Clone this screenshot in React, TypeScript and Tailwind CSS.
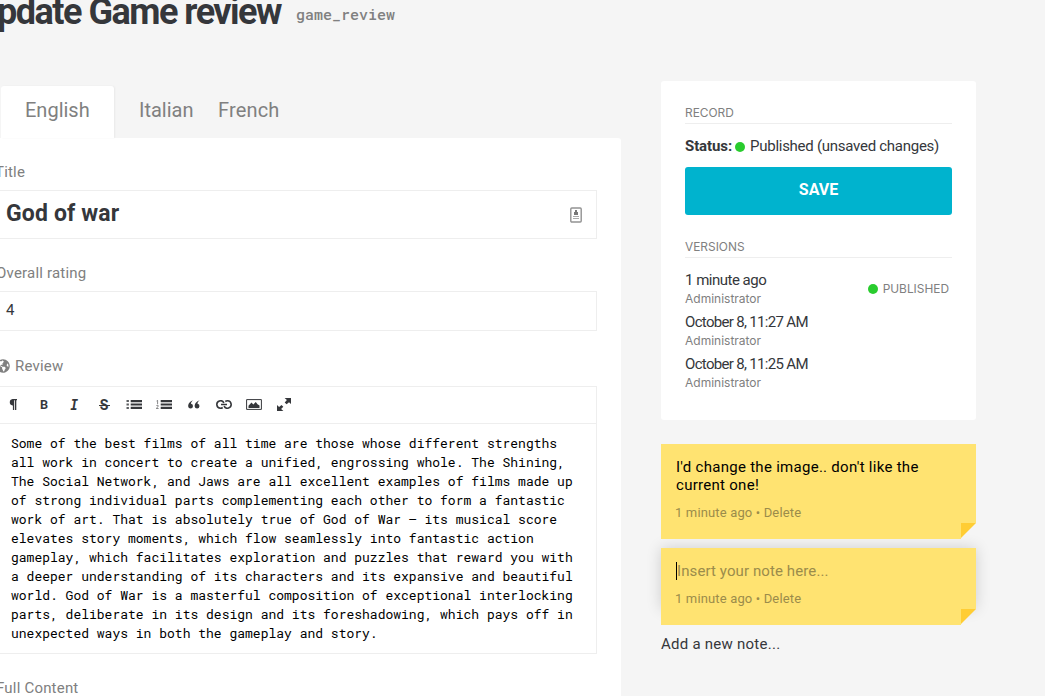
import type { ReactNode } from "react";
import { FaGlobeAmericas } from "react-icons/fa";

const review = [
  "Some of the best films of all time are those whose different strengths",
  "all work in concert to create a unified, engrossing whole. The Shining,",
  "The Social Network, and Jaws are all excellent examples of films made up",
  "of strong individual parts complementing each other to form a fantastic",
  "work of art. That is absolutely true of God of War – its musical score",
  "elevates story moments, which flow seamlessly into fantastic action",
  "gameplay, which facilitates exploration and puzzles that reward you with",
  "a deeper understanding of its characters and its expansive and beautiful",
  "world. God of War is a masterful composition of exceptional interlocking",
  "parts, deliberate in its design and its foreshadowing, which pays off in",
  "unexpected ways in both the gameplay and story.",
];

const versions = [
  { date: "1 minute ago", published: true },
  { date: "October 8, 11:27 AM", published: false },
  { date: "October 8, 11:25 AM", published: false },
];

function Label({ children }: { children: ReactNode }) {
  return (
    <div className="flex h-5 items-center text-[15px] leading-5 tracking-[0.2px] text-[#808080]">{children}</div>
  );
}

function Tool({ children }: { children: ReactNode }) {
  return <button className="flex h-[35px] w-[30px] items-center justify-center text-[#35373b]">{children}</button>;
}

function ListIcon({ numbered = false }: { numbered?: boolean }) {
  return (
    <svg width="16" height="9" viewBox="0 0 16 9" fill="currentColor">
      {numbered ? (
        <path
          d="M.6 1 1.6.4V4M.4 6c.2-1 2-1 2 0 0 .9-2 1.4-2 2.5h2.2"
          fill="none"
          stroke="currentColor"
          strokeWidth=".6"
        />
      ) : (
        <path d="M.5 0h2.4v2H.5zM.5 3.5h2.4v2H.5zM.5 7h2.4v2H.5z" opacity=".8" />
      )}
      <path d="M4.7 0H16v2.2H4.7zM4.7 3.4H16v2.2H4.7zM4.7 6.8H16V9H4.7z" />
    </svg>
  );
}

function Toolbar() {
  return (
    <div className="flex h-[37px] border-b border-[#eeeeee] pl-[2px]">
      <Tool>
        <svg width="8" height="11" viewBox="0 0 8 11" fill="currentColor" className="mr-[2px]">
          <path d="M3.5 0H8v1.2h-.7V11H6V1.2h-.8V11H3.9V6.5h-.4A3.3 3.3 0 0 1 3.5 0Z" />
        </svg>
      </Tool>
      <Tool>
        <span className="font-['Roboto_Mono','DejaVu_Sans_Mono',monospace] text-[13px] font-bold">B</span>
      </Tool>
      <Tool>
        <span className="font-['Roboto_Mono','DejaVu_Sans_Mono',monospace] text-[14px] font-bold italic">I</span>
      </Tool>
      <Tool>
        <span className="relative font-[Roboto,sans-serif] text-[14px] leading-5 font-bold">
          S
          <span className="absolute top-[10px] -left-[1px] h-px w-[11px] bg-[#35373b]" />
        </span>
      </Tool>
      <Tool><ListIcon /></Tool>
      <Tool><ListIcon numbered /></Tool>
      <Tool>
        <svg width="12" height="9" viewBox="0 0 12 9" fill="currentColor">
          <path d="M5.2.3C3.7 1.2 3 2.6 3 3.8a2.4 2.4 0 1 1-2.8 2.6C0 3.8 2 1.2 5.2.3ZM11.7.3c-1.5.9-2.2 2.3-2.2 3.5a2.4 2.4 0 1 1-2.8 2.6C6.5 3.8 8.5 1.2 11.7.3Z" />
        </svg>
      </Tool>
      <Tool>
        <svg width="16" height="9" viewBox="0 0 16 9" fill="none" stroke="currentColor" strokeWidth="1.6">
          <path d="M6.7 7.5A3.6 3.6 0 0 1 4.6 8.2a3.7 3.7 0 1 1 3.3-5.3M9.3 1.5A3.6 3.6 0 0 1 11.4.8a3.7 3.7 0 1 1-3.3 5.3M5 4.5h6" />
        </svg>
      </Tool>
      <Tool>
        <svg width="16" height="11" viewBox="0 0 16 11" fill="currentColor">
          <path d="M.6.6h14.8v9.8H.6z" fill="none" stroke="currentColor" strokeWidth="1" />
          <path d="M2.5 9V6.8l3-3.3 1.8 2L9.8 3l1.7 2.2 2 1.3V9z" />
        </svg>
      </Tool>
      <Tool>
        <svg width="14" height="13" viewBox="0 0 14 13" fill="currentColor">
          <path d="M7.6 0H14v5.9l-2-1.7-2.4 2.1-1.9-1.9L9.9 2zM0 7.1V13h6.4L4.1 11l2.2-2.3-1.8-1.8L2.1 9z" />
        </svg>
      </Tool>
    </div>
  );
}

function SectionTitle({ children }: { children: ReactNode }) {
  return (
    <h2 className="h-[19px] border-b border-[#eeeeee] font-[Inter,sans-serif] text-[11.9px] leading-[16px] text-[#808080]">
      {children}
    </h2>
  );
}

function Note({ children, active = false }: { children: ReactNode; active?: boolean }) {
  return (
    <div>
      <div
        className={
          active
            ? "bg-[#ffe371] px-[15px] pt-[14px] shadow-[0_0_14px_rgba(0,0,0,0.16)]"
            : "bg-[#ffe371] px-[15px] pt-[14px]"
        }
      >
        <div className="text-[15px] leading-[18px]">{children}</div>
        <div className="mt-[9px] -ml-px h-[20px] text-[13px] leading-[20px] tracking-[0.15px] text-[#9b8c4b]">
          1 minute ago • Delete
        </div>
      </div>
      <div className="relative flex h-4">
        <div className="flex-1 bg-[#ffe371]" />
        <svg width="15" height="16" viewBox="0 0 15 16">
          <path d="M0 0h15L0 15z" fill="#ffcd34" />
        </svg>
      </div>
    </div>
  );
}

export default function App() {
  return (
    <div className="flex h-[696px] w-[1045px] overflow-hidden bg-[#f5f5f5] font-[Roboto,sans-serif] text-[#35373b]">
      <main className="-ml-7 w-[649px] shrink-0">
        <header className="flex h-[86px] items-start whitespace-nowrap">
          <h1 className="-mt-[10px] w-[309px] text-right text-[36px] leading-[44px] font-bold tracking-[-1.5px]">
            Update Game review
          </h1>
          <span className="ml-[15px] pt-[4px] font-['Roboto_Mono','DejaVu_Sans_Mono',monospace] text-[15px] leading-5 font-medium text-[#808080]">
            game_review
          </span>
        </header>
        <nav className="flex h-[52px] pl-[29px] text-[20px] leading-[49px] text-[#808080]">
          <span className="w-[113px] rounded-t-[3px] bg-white pl-6 shadow-[1px_0_2px_rgba(0,0,0,0.05)]">English</span>
          <span className="ml-[25px] w-[79px]">Italian</span>
          <span className="tracking-[0.15px]">French</span>
        </nav>
        <section className="h-[600px] rounded-tr-[3px] bg-white px-6 pt-6">
          <Label><span className="-ml-px">Title</span></Label>
          <div className="mt-2 flex h-[49px] items-center justify-between border border-[#eeeeee] pr-[14px] pl-[9px]">
            <span className="-mt-px text-[23px] font-bold tracking-[0.15px]">God of war</span>
            <svg width="12" height="16" viewBox="0 0 12 16" fill="none">
              <rect x=".8" y="1" width="10.4" height="14" rx="1" stroke="#929292" strokeWidth="1.4" />
              <path d="M5 3h2v2h1v3H4V5h1z" fill="#777" />
              <path d="M3 9.5h6M3 11.5h6" stroke="#aaa" />
            </svg>
          </div>
          <div className="mt-6"><Label>Overall rating</Label></div>
          <div className="mt-2 h-10 border border-[#eeeeee] pl-[9px] text-[15px] leading-[37px]">4</div>
          <div className="mt-[25px]">
            <Label><FaGlobeAmericas size={14} className="mr-[5px]" />Review</Label>
          </div>
          <div className="mt-[10px] h-[268px] border border-[#eeeeee]">
            <Toolbar />
            <div className="pt-[10px] pl-[14px] font-['Roboto_Mono','DejaVu_Sans_Mono',monospace] text-[13px] leading-[19px] whitespace-nowrap text-black">
              {review.map((line) => <div key={line}>{line}</div>)}
            </div>
          </div>
          <div className="mt-6"><Label>Full Content</Label></div>
        </section>
      </main>

      <aside className="mt-[81px] ml-10 w-[315px]">
        <section className="h-[339px] rounded-[3px] bg-white px-6 pt-6">
          <SectionTitle>RECORD</SectionTitle>
          <div className="mt-[11px] flex h-[22px] items-center text-[15px] whitespace-nowrap">
            <b className="tracking-[-0.1px]">Status:</b>
            <span className="mt-[2px] mr-[5px] ml-[3px] size-[10px] rounded-full bg-[#29cc2e]" />
            <span className="tracking-[-0.27px]">Published (unsaved changes)</span>
          </div>
          <button className="mt-[10px] flex h-12 w-full items-center justify-center rounded-[3px] bg-[#00b3ce] pb-[3px] text-[16px] font-bold text-white">
            SAVE
          </button>
          <div className="mt-6"><SectionTitle>VERSIONS</SectionTitle></div>
          <div className="mt-[11px]">
            {versions.map((v) => (
              <div key={v.date} className="flex h-[42px] items-center justify-between">
                <div>
                  <div className={v.published ? "h-[22px] text-[15px] leading-[22px] tracking-[-0.5px]" : "h-[22px] text-[15px] leading-[22px] tracking-[-0.68px]"}>
                    {v.date}
                  </div>
                  <div className="h-5 font-[Inter,sans-serif] text-[12px] leading-[16px] text-[#808080]">
                    Administrator
                  </div>
                </div>
                {v.published && (
                  <div className="-mt-[3px] flex items-center pr-[3px] font-[Inter,sans-serif] text-[11.9px] text-[#808080]">
                    <span className="mt-[2px] mr-[5px] size-[10px] rounded-full bg-[#29cc2e]" />
                    PUBLISHED
                  </div>
                )}
              </div>
            ))}
          </div>
        </section>
        <div className="mt-6">
          <Note>
            <p className="tracking-[0.28px] text-black">I'd change the image.. don't like the<br />current one!</p>
          </Note>
        </div>
        <div className="mt-[9px]">
          <Note active>
            <div className="flex">
              <span className="h-[18px] w-px bg-black" />
              <span className="tracking-[0.1px] text-[#9b8c4b]">Insert your note here...</span>
            </div>
          </Note>
        </div>
        <button className="mt-[9px] block h-5 text-[15px] leading-5 tracking-[0.25px]">Add a new note...</button>
      </aside>
    </div>
  );
}
